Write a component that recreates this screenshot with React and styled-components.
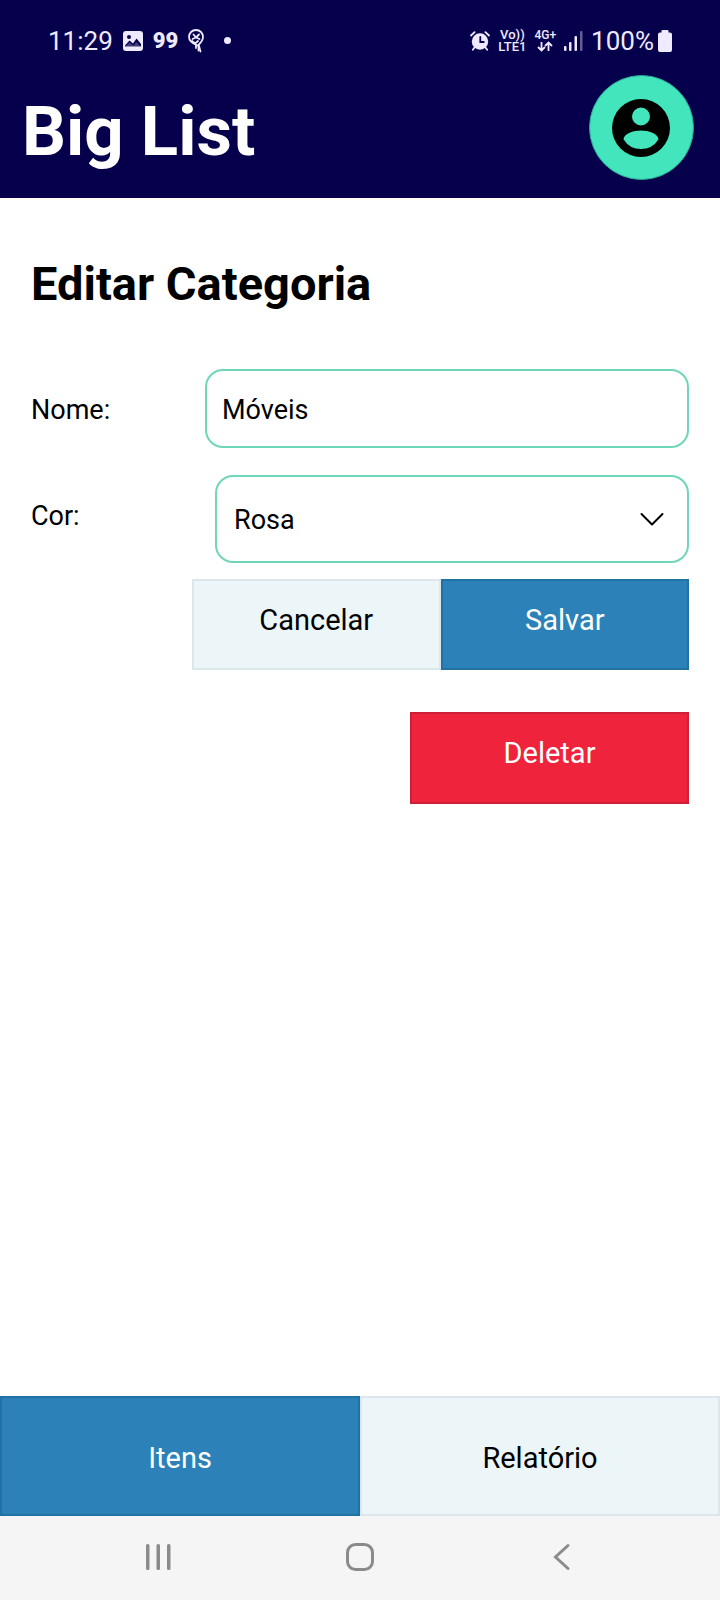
import React from "react";
import styled, { createGlobalStyle } from "styled-components";

const GlobalStyle = createGlobalStyle`
  * { box-sizing: border-box; }
  body { margin: 0; background: #fff; }
  body, button, input, select { font-family: Roboto, "Liberation Sans", sans-serif; }
`;

const Screen = styled.div`
  display: flex;
  flex-direction: column;
  min-height: 100vh;
  color: #000;
`;

const Header = styled.header`
  background: #06004c;
  color: #fff;
  padding-bottom: 18px;
`;

const StatusBar = styled.div`
  display: flex;
  justify-content: space-between;
  align-items: center;
  height: 75px;
  padding: 6px 48px 0 48px;
  color: #efeaff;
`;

const StatusGroup = styled.div`
  display: flex;
  align-items: center;
  gap: ${(p) => p.$gap}px;
`;

const StatusText = styled.span`
  font-size: 26px;
  line-height: 32px;
`;

const BrandText = styled.span`
  font-size: 22px;
  line-height: 32px;
  font-weight: 900;
`;

const NetworkLabel = styled.span`
  display: flex;
  flex-direction: column;
  align-items: center;
  font-size: ${(p) => p.$size}px;
  line-height: 12px;
  font-weight: 500;
`;

const Charge = styled.div`
  display: flex;
  align-items: center;
  gap: 4px;
`;

const Notification = styled.span`
  display: flex;
  padding-left: 10px;
`;

const TitleBar = styled.div`
  display: flex;
  justify-content: space-between;
  align-items: center;
  padding: 0 26px 0 22px;
`;

const AppTitle = styled.h1`
  margin: 0;
  padding-top: 8px;
  font-size: 69px;
  line-height: 80px;
  font-weight: 700;
`;

const Avatar = styled.button`
  display: flex;
  align-items: center;
  justify-content: center;
  width: 105px;
  height: 105px;
  padding: 0 2px 0 0;
  border: 1px solid #2aa596;
  border-radius: 50%;
  background: #43e5bc;
`;

const Main = styled.main`
  flex: 1;
  padding: 58px 31px 0;
`;

const PageTitle = styled.h2`
  margin: 0 0 57px;
  font-size: 47px;
  line-height: 56px;
  font-weight: 700;
`;

const Field = styled.div`
  display: flex;
  align-items: center;
  margin-bottom: ${(p) => p.$after}px;
`;

const Label = styled.label`
  flex: none;
  width: ${(p) => p.$width}px;
  padding-top: ${(p) => p.$drop || 0}px;
  padding-bottom: ${(p) => p.$lift || 0}px;
  font-size: 27px;
  line-height: 32px;
`;

const TextInput = styled.input`
  flex: 1;
  min-width: 0;
  height: 79px;
  padding: 2px 15px 0;
  border: 2px solid #70d6b9;
  border-radius: 18px;
  background: #fff;
  color: #000;
  font-size: 27px;
  outline: none;
`;

const SelectBox = styled.div`
  position: relative;
  flex: 1;
`;

const Select = styled.select`
  display: block;
  width: 100%;
  height: 88px;
  padding: 2px 60px 0 17px;
  border: 2px solid #70d6b9;
  border-radius: 18px;
  background: #fff;
  color: #000;
  font-size: 27px;
  appearance: none;
  outline: none;
`;

const SelectArrow = styled.svg`
  position: absolute;
  right: 24px;
  top: 36px;
  pointer-events: none;
`;

const Actions = styled.div`
  display: flex;
  margin: 0 0 42px 161px;
`;

const DeleteRow = styled.div`
  display: flex;
  justify-content: flex-end;
`;

const tones = {
  light: ["#ecf6f9", "#dde6ea", "#000"],
  blue: ["#2c81b8", "#2271a5", "#fff"],
  red: ["#ef233c", "#cf1f38", "#fff"],
};

const Button = styled.button`
  flex: 1;
  height: 91px;
  padding: 0 0 10px;
  border: 2px solid ${(p) => tones[p.$tone][1]};
  background: ${(p) => tones[p.$tone][0]};
  color: ${(p) => tones[p.$tone][2]};
  font-size: 29px;
  line-height: 34px;
`;

const DeleteButton = styled(Button)`
  flex: 0 0 279px;
  height: 92px;
`;

const Tabs = styled.nav`
  display: flex;
`;

const Tab = styled(Button)`
  height: 120px;
  padding: 4px 0 0;
`;

const SystemBar = styled.div`
  display: flex;
  justify-content: center;
  gap: 142px;
  height: 84px;
  background: #f5f5f5;
`;

const SystemButton = styled.button`
  display: flex;
  align-items: center;
  justify-content: center;
  width: 60px;
  padding: 0 0 2px;
  border: 0;
  background: none;
`;

const PictureIcon = () => (
  <svg width="20" height="20" viewBox="0 0 20 20">
    <rect width="20" height="20" rx="3" fill="currentColor" />
    <circle cx="6" cy="6" r="2" fill="#06004c" />
    <path fill="#06004c" d="M2 14.500l4.500-5 3.500 3 3.500-5 4.500 5.500v2.500H2z" />
    <path fill="currentColor" d="M2 18v-2.500l4.500-4 4 3 3-3.500 4.500 5v2z" opacity=".25" />
  </svg>
);

const PinIcon = () => (
  <svg width="16" height="24" viewBox="0 0 16 24" fill="none" stroke="currentColor" strokeLinecap="round" strokeLinejoin="round">
    <path strokeWidth="1.800" d="M9.500 16.500C4.500 14.500 1 12 1 8c0-4 3-7 7-7s7 3 7 7c0 3-2 5.500-4.500 8v5.500" />
    <path strokeWidth="1.800" d="M4.500 10L8 8.500 11 5.500M5.500 5.500L8 8.500l3.500 1.500M4 12l3 2.500 3-2.500M8 16v3M11 17l1.500 5.500" />
  </svg>
);

const DotIcon = () => (
  <svg width="7" height="7" viewBox="0 0 7 7"><circle cx="3.500" cy="3.500" r="3.500" fill="currentColor" /></svg>
);

const AlarmIcon = () => (
  <svg width="20" height="20" viewBox="0 0 20 20" fill="none" stroke="currentColor" strokeLinecap="round">
    <circle cx="10" cy="10.500" r="8.200" fill="currentColor" stroke="none" />
    <path strokeWidth="1.800" d="M1 4.500L4.600 1.200M19 4.500L15.400 1.200M4.500 16.500L2.800 18.800M15.500 16.500l1.700 2.300" />
    <path stroke="#06004c" strokeWidth="1.800" d="M10.300 6v5h3.500" />
  </svg>
);

const DataArrowsIcon = () => (
  <svg width="16" height="11" viewBox="0 0 16 11" fill="none" stroke="currentColor" strokeWidth="1.800">
    <path d="M4.500 1v8M1 6l3.500 3.500L8 6M11.500 10V2M8 5l3.500-3.500L15 5" />
  </svg>
);

const SignalIcon = () => (
  <svg width="19" height="20" viewBox="0 0 19 20" fill="currentColor">
    <rect x="0" y="15" width="2.500" height="5" rx="1" />
    <rect x="5" y="11" width="2.500" height="9" rx="1" />
    <rect x="10.500" y="5" width="2.500" height="15" rx="1" />
    <rect x="16" y="0" width="2.500" height="20" rx="1" opacity=".4" />
  </svg>
);

const BatteryIcon = () => (
  <svg width="14" height="22" viewBox="0 0 14 22">
    <path fill="currentColor" d="M4.500 0h5a1 1 0 0 1 1 1v1.500H12a2 2 0 0 1 2 2V20a2 2 0 0 1-2 2H2a2 2 0 0 1-2-2V4.500a2 2 0 0 1 2-2h1.500V1a1 1 0 0 1 1-1z" />
  </svg>
);

const AccountIcon = () => (
  <svg width="58" height="58" viewBox="0 0 58 58">
    <path fill="#000" fillRule="evenodd" d="M29 0a29 29 0 1 0 0 58 29 29 0 0 0 0-58zM29 8.500a9 9 0 1 1 0 18 9 9 0 0 1 0-18zM29 31.500c7.500 0 17 3 17.500 8.700A20.500 20.500 0 0 1 29 50a20.500 20.500 0 0 1-17.500-9.800C12 34.500 21.500 31.500 29 31.500z" />
  </svg>
);

const RecentsIcon = () => (
  <svg width="26" height="28" viewBox="0 0 26 28" fill="#8b8b8b">
    <rect x="1" y="1" width="3.500" height="26" rx="1.500" />
    <rect x="11.500" y="1" width="3.500" height="26" rx="1.500" />
    <rect x="22" y="1" width="3.500" height="26" rx="1.500" />
  </svg>
);

const HomeIcon = () => (
  <svg width="28" height="28" viewBox="0 0 28 28">
    <rect x="1.500" y="1.500" width="25" height="25" rx="8" fill="none" stroke="#8b8b8b" strokeWidth="3" />
  </svg>
);

const BackIcon = () => (
  <svg width="18" height="28" viewBox="0 0 18 28">
    <path d="M15 2.500L2.500 14 15 25.500" fill="none" stroke="#8b8b8b" strokeWidth="3" strokeLinecap="round" />
  </svg>
);

export default function App() {
  return (
    <Screen>
      <GlobalStyle />
      <Header>
        <StatusBar>
          <StatusGroup $gap={10}>
            <StatusText>11:29</StatusText>
            <PictureIcon />
            <BrandText>99</BrandText>
            <PinIcon />
            <Notification><DotIcon /></Notification>
          </StatusGroup>
          <StatusGroup $gap={8}>
            <AlarmIcon />
            <NetworkLabel $size={13}><span>Vo))</span><span>LTE1</span></NetworkLabel>
            <NetworkLabel $size={12}><span>4G+</span><DataArrowsIcon /></NetworkLabel>
            <SignalIcon />
            <Charge><StatusText>100%</StatusText><BatteryIcon /></Charge>
          </StatusGroup>
        </StatusBar>
        <TitleBar>
          <AppTitle>Big List</AppTitle>
          <Avatar type="button" aria-label="Perfil"><AccountIcon /></Avatar>
        </TitleBar>
      </Header>
      <Main>
        <PageTitle>Editar Categoria</PageTitle>
        <Field $after={27}>
          <Label htmlFor="nome" $width={174} $drop={2}>Nome:</Label>
          <TextInput id="nome" type="text" defaultValue="Móveis" />
        </Field>
        <Field $after={16}>
          <Label htmlFor="cor" $width={184} $lift={6}>Cor:</Label>
          <SelectBox>
            <Select id="cor" defaultValue="Rosa">
              <option>Rosa</option>
            </Select>
            <SelectArrow width="26" height="16" viewBox="0 0 26 16">
              <path d="M2.500 3L13 13.500 23.500 3" fill="none" stroke="#000" strokeWidth="2" strokeLinecap="round" strokeLinejoin="round" />
            </SelectArrow>
          </SelectBox>
        </Field>
        <Actions>
          <Button type="button" $tone="light">Cancelar</Button>
          <Button type="button" $tone="blue">Salvar</Button>
        </Actions>
        <DeleteRow>
          <DeleteButton type="button" $tone="red">Deletar</DeleteButton>
        </DeleteRow>
      </Main>
      <Tabs>
        <Tab type="button" $tone="blue">Itens</Tab>
        <Tab type="button" $tone="light">Relatório</Tab>
      </Tabs>
      <SystemBar>
        <SystemButton type="button" aria-label="Recentes"><RecentsIcon /></SystemButton>
        <SystemButton type="button" aria-label="Início"><HomeIcon /></SystemButton>
        <SystemButton type="button" aria-label="Voltar"><BackIcon /></SystemButton>
      </SystemBar>
    </Screen>
  );
}
